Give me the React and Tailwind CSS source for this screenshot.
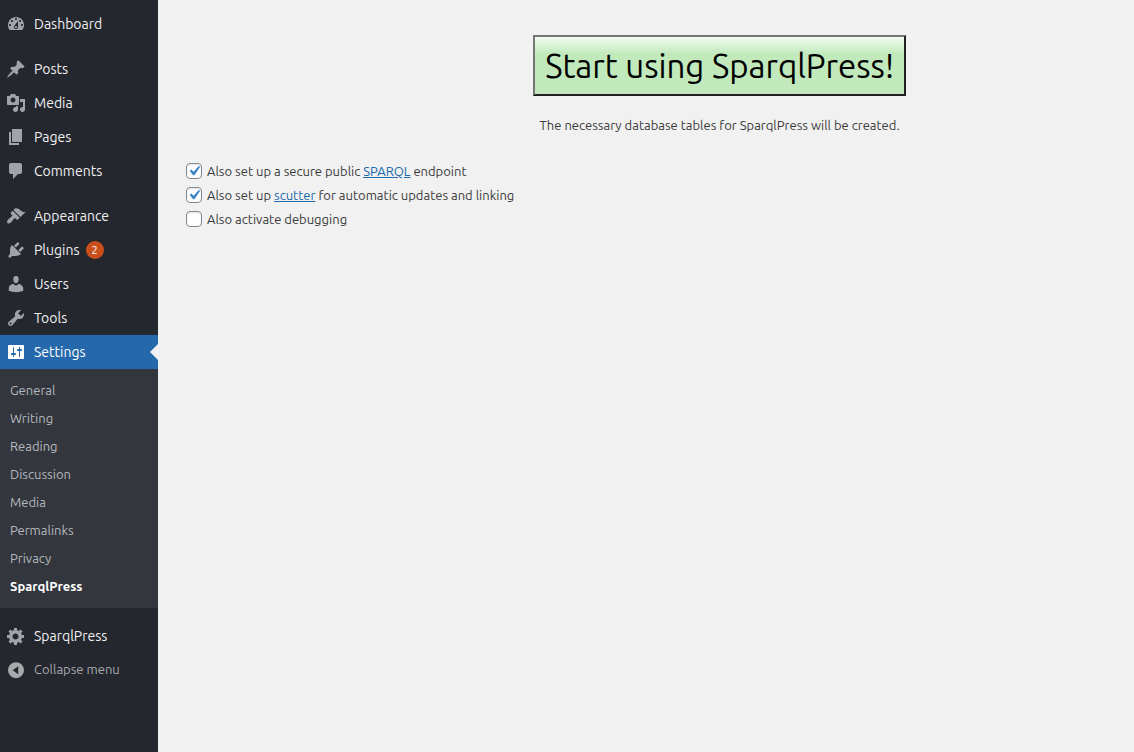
import React from "react";

const icons = {
  dashboard:
    "M3.76 16h12.48c1.1-1.37 1.76-3.11 1.76-5 0-4.42-3.58-8-8-8s-8 3.58-8 8c0 1.89.66 3.63 1.76 5zM10 4c.55 0 1 .45 1 1s-.45 1-1 1-1-.45-1-1 .45-1 1-1zM6 6c.55 0 1 .45 1 1s-.45 1-1 1-1-.45-1-1 .45-1 1-1zm8 0c.55 0 1 .45 1 1s-.45 1-1 1-1-.45-1-1 .45-1 1-1zm-5.37 5.55L12 7v6c0 1.1-.9 2-2 2s-2-.9-2-2c0-.57.24-1.08.63-1.45zM4 10c.55 0 1 .45 1 1s-.45 1-1 1-1-.45-1-1 .45-1 1-1zm12 0c.55 0 1 .45 1 1s-.45 1-1 1-1-.45-1-1 .45-1 1-1zm-5 3c0-.55-.45-1-1-1s-1 .45-1 1 .45 1 1 1 1-.45 1-1z",
  post: "M10.44 3.02l1.82-1.82 6.36 6.35-1.83 1.82c-1.05-.68-2.48-.57-3.41.36l-.75.75c-.92.93-1.04 2.35-.35 3.41l-1.83 1.82-2.41-2.41-2.8 2.79c-.42.42-3.38 2.71-3.8 2.29s1.86-3.39 2.28-3.81l2.79-2.79L4.1 9.36l1.83-1.82c1.05.69 2.48.57 3.4-.36l.75-.75c.93-.92 1.05-2.35.36-3.41z",
  media:
    "M13 11V4c0-.55-.45-1-1-1h-1.67L9 1H5L3.67 3H2c-.55 0-1 .45-1 1v7c0 .55.45 1 1 1h10c.55 0 1-.45 1-1zM7 4.5c1.38 0 2.5 1.12 2.5 2.5S8.38 9.5 7 9.5 4.5 8.38 4.5 7 5.62 4.5 7 4.5zM14 6h5v10.5c0 1.38-1.12 2.5-2.5 2.5S14 17.88 14 16.5s1.12-2.5 2.5-2.5c.17 0 .34.02.5.05V9h-3V6zm-4 8.05V13h2v3.5c0 1.38-1.12 2.5-2.5 2.5S7 17.88 7 16.5 8.12 14 9.5 14c.17 0 .34.02.5.05z",
  page: "M6 15V2h10v13H6zm-1 1h8v2H3V5h2v11z",
  comments:
    "M5 2h9c1.1 0 2 .9 2 2v7c0 1.1-.9 2-2 2h-2l-5 5v-5H5c-1.1 0-2-.9-2-2V4c0-1.1.9-2 2-2z",
  appearance:
    "M14.48 11.06L7.41 3.99l1.5-1.5c.5-.56 2.3-.47 3.51.32 1.21.8 1.43 1.28 2.91 2.1 1.18.64 2.45 1.26 4.45.85zm-.71.71L6.7 4.7 4.93 6.47c-.39.39-.39 1.02 0 1.41l1.06 1.06c.39.39.39 1.03 0 1.42-.6.6-1.43 1.11-2.21 1.69-.35.26-.7.53-1.01.84C1.43 14.23.4 16.08 1.4 17.07c.99 1 2.84-.03 4.18-1.36.31-.31.58-.66.85-1.02.57-.78 1.08-1.61 1.69-2.21.39-.39 1.02-.39 1.41 0l1.06 1.06c.39.39 1.02.39 1.41 0z",
  plugins:
    "M13.11 4.36L9.87 7.6 8 5.73l3.24-3.24c.35-.34 1.05-.2 1.56.32.52.51.66 1.21.31 1.55zm-8 1.77l.91-1.12 9.01 9.01-1.19.84c-.71.71-2.63 1.16-3.82 1.16H6.14L4.9 17.26c-.59.59-1.54.59-2.12 0-.59-.58-.59-1.53 0-2.12l1.24-1.24v-3.88c0-1.13.4-3.19 1.09-3.89zm7.26 3.97l3.24-3.24c.34-.35 1.04-.21 1.55.31.52.51.66 1.21.31 1.55l-3.24 3.25z",
  users:
    "M10 9.25c-2.27 0-2.73-3.44-2.73-3.44C7 4.02 7.82 2 9.97 2c2.16 0 2.98 2.02 2.71 3.81 0 0-.41 3.44-2.68 3.44zm0 2.57L12.72 10c2.39 0 4.52 2.33 4.52 4.53v2.49s-3.65 1.13-7.24 1.13c-3.65 0-7.24-1.13-7.24-1.13v-2.49c0-2.25 1.94-4.48 4.47-4.48z",
  tools:
    "M16.68 9.77c-1.34 1.34-3.3 1.67-4.95.99l-5.41 6.52c-.99.99-2.59.99-3.58 0s-.99-2.59 0-3.57l6.52-5.42c-.68-1.65-.35-3.61.99-4.95 1.28-1.28 3.12-1.62 4.72-1.06l-2.89 2.89 2.82 2.82 2.86-2.87c.53 1.58.18 3.39-1.08 4.65zM3.81 16.21c.4.39 1.04.39 1.43 0 .4-.4.4-1.04 0-1.43-.39-.4-1.03-.4-1.43 0-.39.39-.39 1.03 0 1.43z",
  settings:
    "M18 16V4c0-.55-.45-1-1-1H3c-.55 0-1 .45-1 1v12c0 .55.45 1 1 1h14c.55 0 1-.45 1-1zM8 11h1c.55 0 1 .45 1 1s-.45 1-1 1H8v1.5c0 .28-.22.5-.5.5s-.5-.22-.5-.5V13H6c-.55 0-1-.45-1-1s.45-1 1-1h1V5.5c0-.28.22-.5.5-.5s.5.22.5.5V11zm5-2h-1c-.55 0-1-.45-1-1s.45-1 1-1h1V5.5c0-.28.22-.5.5-.5s.5.22.5.5V7h1c.55 0 1 .45 1 1s-.45 1-1 1h-1v5.5c0 .28-.22.5-.5.5s-.5-.22-.5-.5V9z",
  generic:
    "M18 12h-2.18c-.17.7-.44 1.35-.81 1.93l1.54 1.54-2.1 2.1-1.54-1.54c-.58.36-1.23.63-1.91.79V19H8v-2.18c-.68-.16-1.33-.43-1.91-.79l-1.54 1.54-2.12-2.12 1.54-1.54c-.36-.58-.63-1.23-.79-1.91H1V9.03h2.17c.16-.7.44-1.35.8-1.94L2.43 5.55l2.1-2.1 1.54 1.54c.58-.37 1.24-.64 1.93-.81V2h3v2.18c.68.16 1.33.43 1.91.79l1.54-1.54 2.12 2.12-1.54 1.54c.36.59.64 1.24.8 1.94H18V12zm-8.5 1.5c1.66 0 3-1.34 3-3s-1.34-3-3-3-3 1.34-3 3 1.34 3 3 3z",
  collapse:
    "M10 2.2a8 8 0 1 0 0 16 8 8 0 0 0 0-16zM12.2 6.2v8L6.6 10.2z",
};

const groups = [
  [{ label: "Dashboard", icon: "dashboard" }],
  [
    { label: "Posts", icon: "post" },
    { label: "Media", icon: "media" },
    { label: "Pages", icon: "page" },
    { label: "Comments", icon: "comments" },
  ],
  [
    { label: "Appearance", icon: "appearance" },
    { label: "Plugins", icon: "plugins", count: 2 },
    { label: "Users", icon: "users" },
    { label: "Tools", icon: "tools" },
    {
      label: "Settings",
      icon: "settings",
      current: true,
      children: [
        "General",
        "Writing",
        "Reading",
        "Discussion",
        "Media",
        "Permalinks",
        "Privacy",
        "SparqlPress",
      ],
    },
  ],
  [{ label: "SparqlPress", icon: "generic" }],
];

function Icon({ name, className }) {
  return (
    <svg viewBox="0 0 20 20" className={`size-5 shrink-0 ${className}`} fill="currentColor" fillRule="evenodd" aria-hidden="true">
      <path d={icons[name]} />
    </svg>
  );
}

function MenuItem({ item }) {
  return (
    <li>
      <a
        href="#"
        className={`relative flex h-[34px] items-center gap-2 pl-1.5 text-[14px] ${
          item.current ? "bg-[#2568ab] text-white" : "text-[#f0f0f1]"
        }`}
      >
        <Icon name={item.icon} className={item.current ? "text-white" : "text-[#a0a4aa]"} />
        <span>{item.label}</span>
        {item.count && (
          <span className="-ml-0.5 flex size-[18px] items-center justify-center rounded-full bg-[#ca4f1b] text-[11px] text-white">
            {item.count}
          </span>
        )}
        {item.current && (
          <span className="absolute top-1/2 right-0 -translate-y-1/2 border-8 border-l-0 border-transparent border-r-[#f1f1f1]" />
        )}
      </a>
      {item.children && (
        <ul className="bg-[#33363d] pt-2 pb-[7px]">
          {item.children.map((child) => (
            <li key={child}>
              <a
                href="#"
                className={`flex h-7 items-center px-2.5 text-[13px] ${
                  child === "SparqlPress" ? "font-bold text-white" : "text-[#b4b9be]"
                }`}
              >
                {child}
              </a>
            </li>
          ))}
        </ul>
      )}
    </li>
  );
}

function Option({ id, checked, children }) {
  return (
    <div className="flex items-center gap-[5px]">
      <span className="grid size-4 shrink-0">
        <input
          id={id}
          type="checkbox"
          defaultChecked={checked}
          className="peer col-start-1 row-start-1 size-4 appearance-none rounded-[4px] border border-[#7e8993] bg-white shadow-[inset_0_1px_2px_rgba(0,0,0,0.1)]"
        />
        <svg
          viewBox="0 0 20 20"
          className="pointer-events-none invisible col-start-1 row-start-1 size-5 -translate-x-0.5 -translate-y-0.5 peer-checked:visible"
          aria-hidden="true"
        >
          <path d="M14.83 4.89l1.34.94-5.81 8.38H9.02L5.78 9.67l1.34-1.25 2.57 2.4z" fill="#3582c4" />
        </svg>
      </span>
      <label htmlFor={id}>{children}</label>
    </div>
  );
}

export default function App() {
  return (
    <div className="flex min-h-screen bg-[#f1f1f1] font-['Ubuntu','Noto_Sans',sans-serif] text-[13px] text-[#3c3c3c]">
      <nav aria-label="Main menu" className="w-[158px] shrink-0 bg-[#24272e] pt-[7px]">
        <div className="flex flex-col gap-[11px]">
          {groups.map((group) => (
            <ul key={group[0].label}>
              {group.map((item) => (
                <MenuItem key={item.label} item={item} />
              ))}
            </ul>
          ))}
        </div>
        <button type="button" className="flex h-[34px] w-full items-center gap-2 pl-1.5 text-[#a7aaad]">
          <Icon name="collapse" className="text-[#a7aaad]" />
          <span>Collapse menu</span>
        </button>
      </nav>
      <main className="flex-1 px-7 pt-[35px]">
        <div className="flex flex-col items-center pl-[16%]">
          <button
            type="button"
            className="border-2 border-t-[#767676] border-r-[#212121] border-b-[#212121] border-l-[#767676] bg-[#c1e9bc] bg-linear-to-b from-[#f0fcef] to-[#c1e9bc] to-30% px-2.5 py-2 text-[33px] leading-[41px] text-black"
          >
            Start using SparqlPress!
          </button>
          <p className="mt-[19px] leading-5">The necessary database tables for SparqlPress will be created.</p>
        </div>
        <div className="mt-[26px] flex flex-col gap-1 leading-5">
          <Option id="endpoint" checked>
            Also set up a secure public{" "}
            <a href="#" className="text-[#1c69ab] underline">SPARQL</a> endpoint
          </Option>
          <Option id="scutter" checked>
            Also set up{" "}
            <a href="#" className="text-[#1c69ab] underline">scutter</a> for automatic updates and linking
          </Option>
          <Option id="debugging">Also activate debugging</Option>
        </div>
      </main>
    </div>
  );
}
